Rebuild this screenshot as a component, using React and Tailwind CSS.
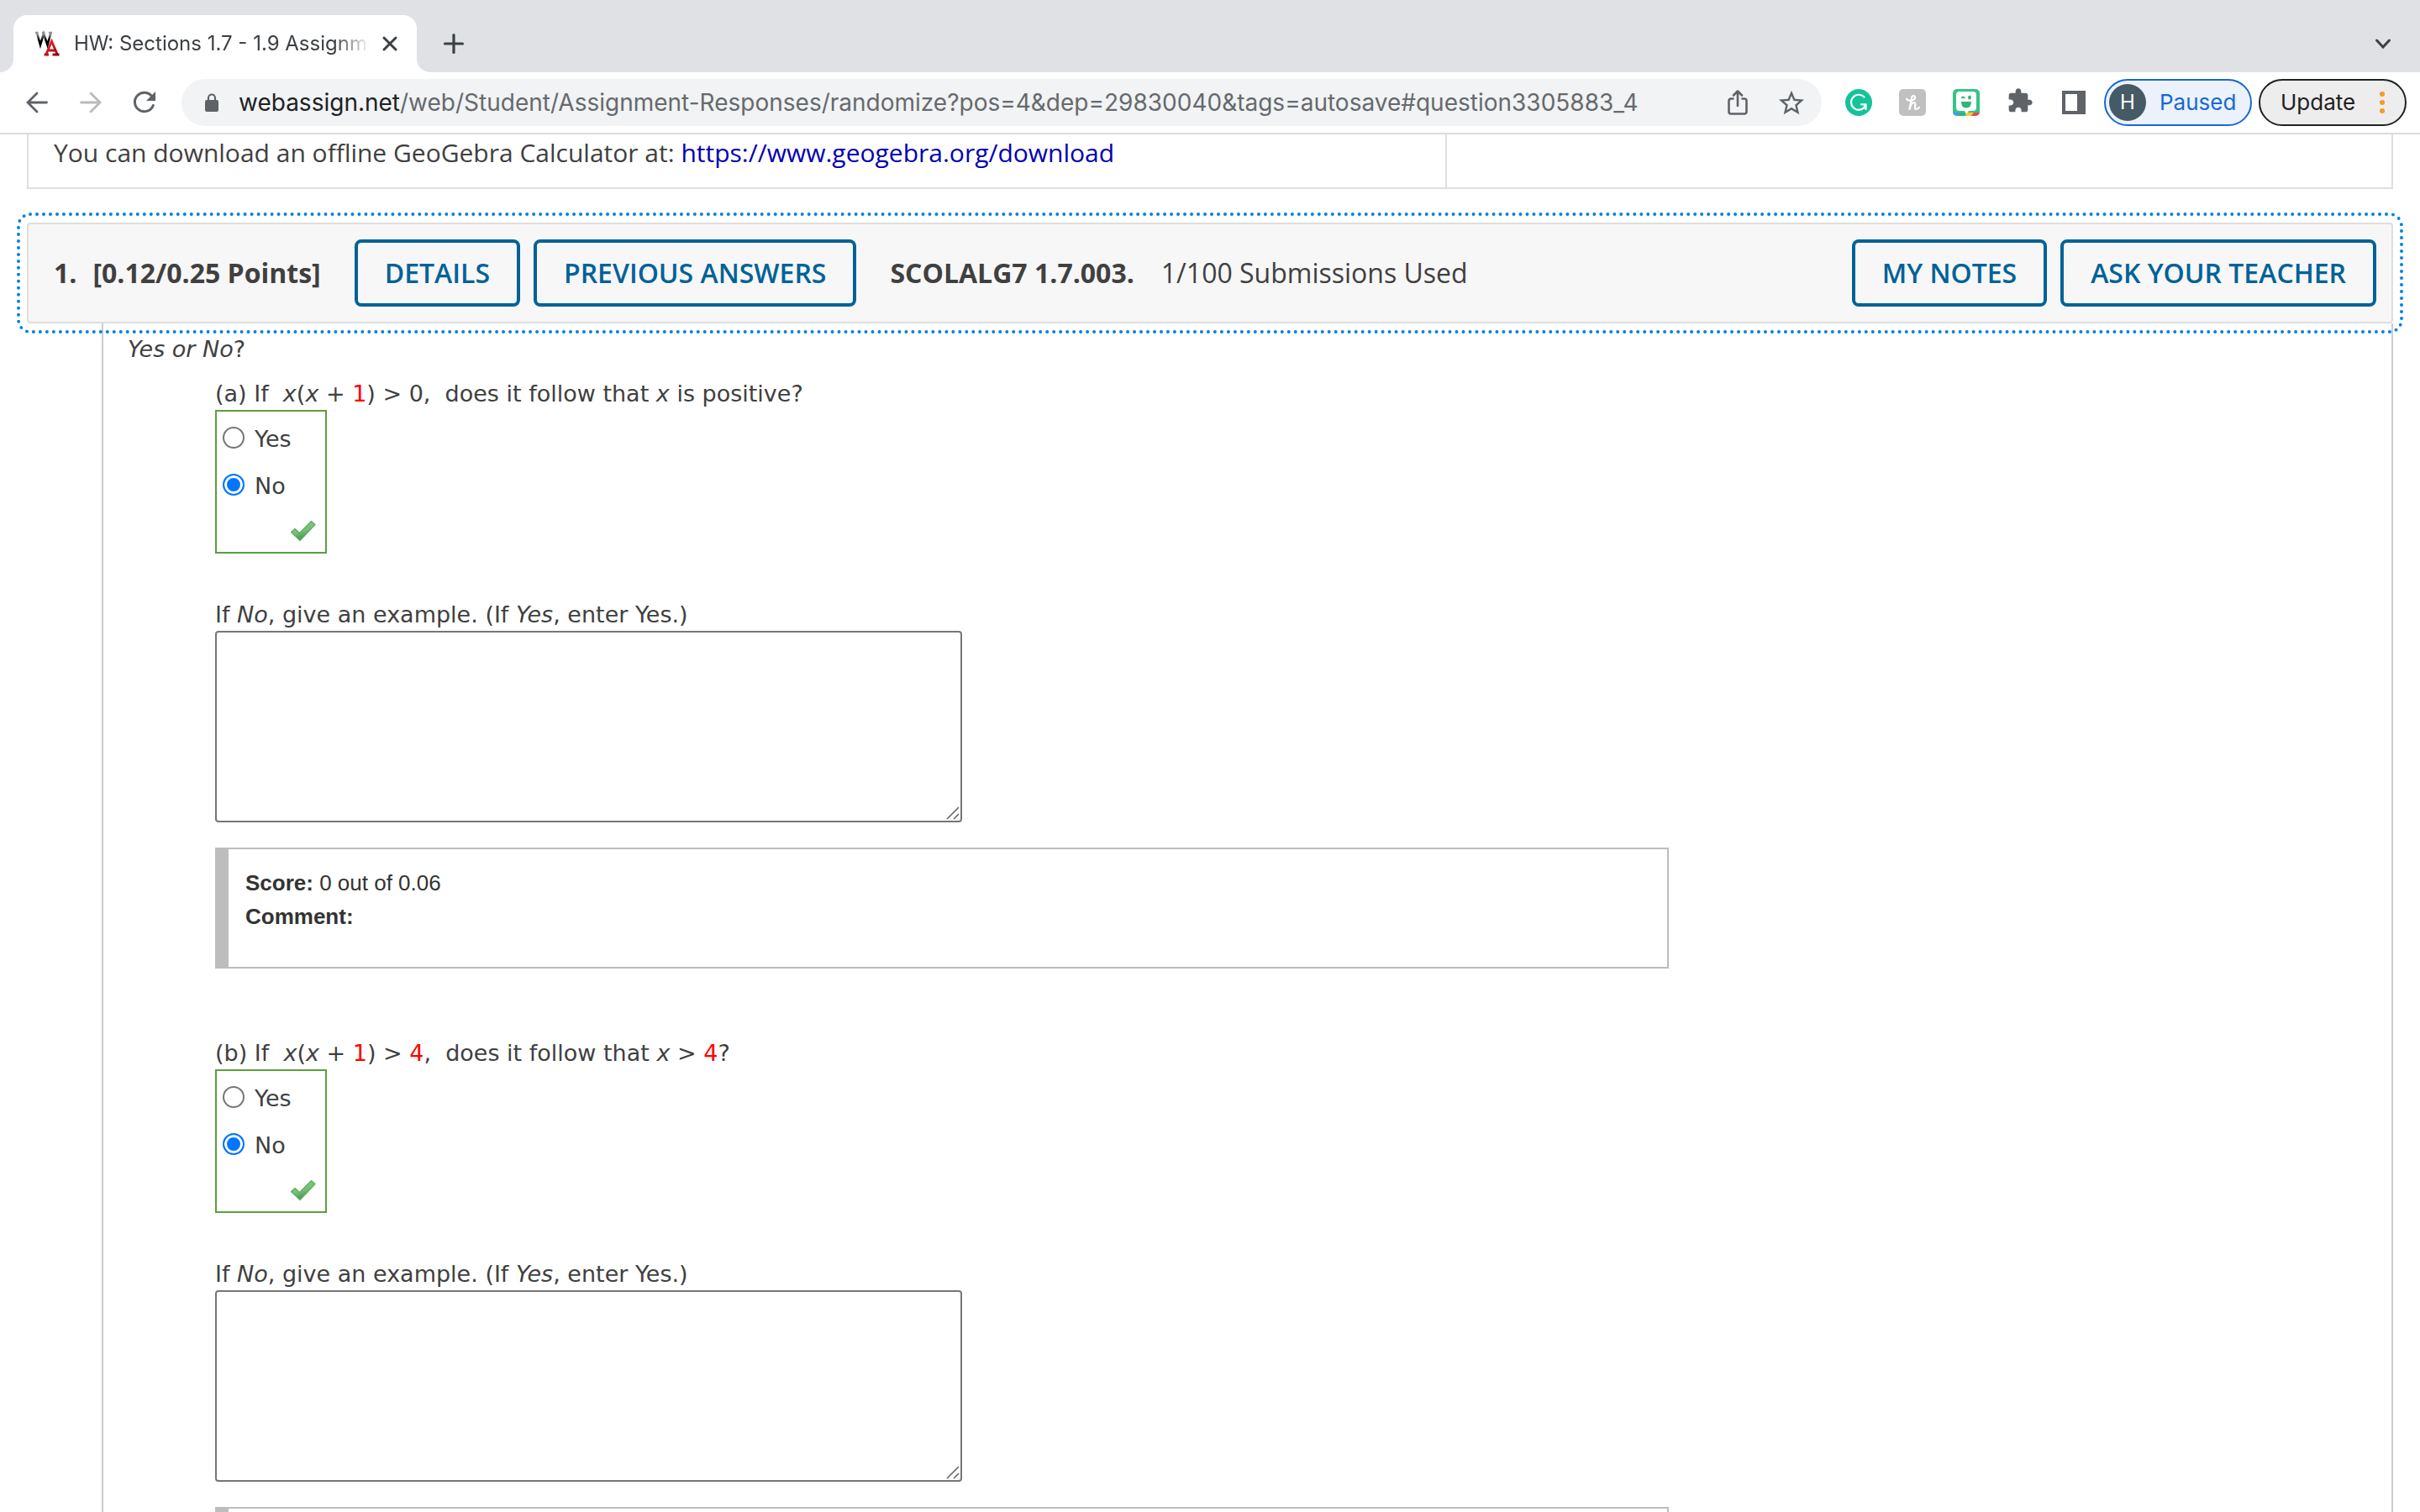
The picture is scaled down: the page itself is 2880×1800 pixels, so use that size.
import React from 'react';

const UI = "font-['Inter','Liberation_Sans',sans-serif]";
const OPEN = "font-['Open_Sans','Noto_Sans',sans-serif]";
const VERDANA = "font-['DejaVu_Sans',sans-serif]";

function Favicon() {
  return (
    <svg width="32" height="32" viewBox="0 0 32 32" className="shrink-0" aria-hidden="true">
      <defs>
        <linearGradient id="fav-w" x1="0" y1="0" x2="0" y2="1">
          <stop offset="0.1" stopColor="#909090" />
          <stop offset="0.6" stopColor="#000" />
        </linearGradient>
        <linearGradient id="fav-a" x1="0" y1="0" x2="1" y2="1">
          <stop offset="0" stopColor="#ff2a2a" />
          <stop offset="1" stopColor="#8e0010" />
        </linearGradient>
      </defs>
      <path d="M2 3h3.500M10 3h3.500M18 3h4M4 3l4 14.500L12 4l4.500 13.500L20.500 3" fill="none" stroke="url(#fav-w)" strokeWidth="2.600" />
      <path d="M12.500 29h5.500M22.500 29h8M15 28.500l6.500-15.500L28 28.500M17.500 24h8" fill="none" stroke="url(#fav-a)" strokeWidth="2.800" />
    </svg>
  );
}

function IconButton({ label, children, className = '' }) {
  return (
    <button type="button" aria-label={label} className={`flex size-16 shrink-0 items-center justify-center ${className}`}>
      {children}
    </button>
  );
}

function Arrow({ forward }) {
  return (
    <svg width="28" height="28" viewBox="0 0 28 28" fill="none" stroke={forward ? '#b9babc' : '#5f6368'} strokeWidth="2.800" strokeLinecap="round">
      {forward ? <path d="M2.500 14h22.500M14 3l11 11-11 11" /> : <path d="M25.500 14H3M14 3L3 14l11 11" />}
    </svg>
  );
}

function TabStrip() {
  return (
    <div className="flex h-[86px] items-end bg-[#dfe1e5]">
      <div className="size-4 shrink-0 bg-white"><div className="size-4 rounded-br-2xl bg-[#dfe1e5]" /></div>
      <div className="flex h-[68px] w-[480px] items-center rounded-t-2xl bg-white pl-6 pr-4">
        <Favicon />
        <span className="ml-4 flex-1 overflow-hidden whitespace-nowrap text-[24px] leading-8 text-[#3c4043] [mask-image:linear-gradient(to_right,black_88%,transparent)]">
          HW: Sections 1.7 - 1.9 Assignment
        </span>
        <button type="button" aria-label="Close tab" className="ml-2 flex size-8 items-center justify-center">
          <svg width="20" height="20" viewBox="0 0 20 20" stroke="#3c4043" strokeWidth="3" strokeLinecap="round"><path d="M3 3l14 14M17 3L3 17" /></svg>
        </button>
      </div>
      <div className="size-4 shrink-0 bg-white"><div className="size-4 rounded-bl-2xl bg-[#dfe1e5]" /></div>
      <button type="button" aria-label="New tab" className="flex h-[68px] w-14 items-center justify-center">
        <svg width="26" height="26" viewBox="0 0 26 26" stroke="#3c4043" strokeWidth="3.200" strokeLinecap="round"><path d="M13 2.500v21M2.500 13h21" /></svg>
      </button>
      <button type="button" aria-label="Search tabs" className="ml-auto mr-5 flex h-[68px] w-12 items-center justify-center">
        <svg width="20" height="14" viewBox="0 0 20 14" fill="none" stroke="#3c4043" strokeWidth="3" strokeLinecap="round"><path d="M2.500 3l7.500 8 7.500-8" /></svg>
      </button>
    </div>
  );
}

function Toolbar() {
  return (
    <div className="flex h-[74px] items-center border-b-2 border-[#dadbde] bg-white pl-3 pr-4">
      <IconButton label="Back"><Arrow /></IconButton>
      <IconButton label="Forward"><Arrow forward /></IconButton>
      <IconButton label="Reload">
        <svg width="30" height="30" viewBox="0 0 30 30">
          <path d="M25.300 18.500A11.300 11.300 0 1 1 24 8" fill="none" stroke="#5f6368" strokeWidth="3" strokeLinecap="round" />
          <path d="M28 2v11H17z" fill="#5f6368" />
        </svg>
      </IconButton>
      <div className="ml-3 flex h-14 flex-1 items-center rounded-full bg-[#f1f3f4] pl-7 pr-1">
        <svg width="16" height="22" viewBox="0 0 16 22" className="shrink-0" aria-hidden="true">
          <rect y="8" width="16" height="14" rx="2" fill="#5f6368" />
          <path d="M4 9V5.500a4 4 0 0 1 8 0V9" fill="none" stroke="#5f6368" strokeWidth="2.200" />
        </svg>
        <label htmlFor="address" className="ml-6 text-[28px] leading-10 text-[#202124]">webassign.net</label>
        <input
          id="address"
          type="text"
          defaultValue="/web/Student/Assignment-Responses/randomize?pos=4&dep=29830040&tags=autosave#question3305883_4"
          className="min-w-0 flex-1 bg-transparent text-[28px] leading-10 text-[#66696d] outline-none"
        />
        <IconButton label="Share this page">
          <svg width="26" height="32" viewBox="0 0 26 32" fill="none" stroke="#5f6368" strokeWidth="2.600" strokeLinecap="round" strokeLinejoin="round">
            <path d="M7.500 11.500H5A2.500 2.500 0 0 0 2.500 14v13A2.500 2.500 0 0 0 5 29.500h16a2.500 2.500 0 0 0 2.500-2.500V14a2.500 2.500 0 0 0-2.500-2.500h-2.500M13 20V3M8 7.500L13 2.500l5 5" />
          </svg>
        </IconButton>
        <IconButton label="Bookmark this tab">
          <svg width="30" height="30" viewBox="0 0 24 24" fill="#5f6368">
            <path d="M22 9.240l-7.190-.62L12 2 9.190 8.630 2 9.240l5.460 4.730L5.820 21 12 17.270 18.180 21l-1.630-7.030L22 9.240zM12 15.400l-3.760 2.270 1-4.280-3.320-2.880 4.380-.38L12 6.100l1.710 4.040 4.380.38-3.320 2.880 1 4.280L12 15.400z" transform="translate(-2.400 -1.800) scale(1.200)" />
          </svg>
        </IconButton>
      </div>
      <div className="ml-3 flex items-center">
        <IconButton label="Grammarly">
          <svg width="32" height="32" viewBox="0 0 32 32">
            <circle cx="16" cy="16" r="16" fill="#15c39a" />
            <path d="M22.500 9.500A9 9 0 1 0 24.200 19.500M24.500 24v-5.700h-5.500" fill="none" stroke="#fff" strokeWidth="2.200" strokeLinecap="round" />
          </svg>
        </IconButton>
        <IconButton label="Honey">
          <svg width="32" height="32" viewBox="0 0 32 32">
            <rect width="32" height="32" rx="5" fill="#c0c0c0" />
            <path d="M9 11.500c1 3.500 10 2.500 10-1.500 0-3-3.500-2.500-4 .5L12.500 24c1-4 3-8 5.500-8 3 0-.5 8 2 8 1.500 0 2.700-.8 4-2" fill="none" stroke="#fff" strokeWidth="2.200" strokeLinecap="round" strokeLinejoin="round" />
          </svg>
        </IconButton>
        <IconButton label="Bitmoji">
          <svg width="32" height="32" viewBox="0 0 32 32">
            <defs><clipPath id="bit"><rect width="32" height="32" rx="5" /></clipPath></defs>
            <g clipPath="url(#bit)">
              <path fill="#36c486" d="M0 0h32v32H0z" />
              <path fill="#3f9bf0" d="M0 28h9l-3 4H0z" />
              <path fill="#2fb577" d="M9 28h7l-3 4H6z" />
              <path fill="#fccb30" d="M17 28h8l-3 4h-7z" />
              <path fill="#ef4a3c" d="M25 28h7v4H22z" />
              <path fill="#fff" d="M8 3h16q4 0 4 4v15q0 4-4 4h-5l-3 4-2-4H8q-4 0-4-4V7q0-4 4-4z" />
            </g>
            <path d="M10 15h12q0 7.500-6 7.500T10 15z" fill="#2fb577" />
            <ellipse cx="20" cy="10" rx="1.900" ry="2.600" fill="#2fb577" />
            <path d="M10.500 11q1.800-3 3.600 0" fill="none" stroke="#2fb577" strokeWidth="2" />
          </svg>
        </IconButton>
        <IconButton label="Extensions">
          <svg width="32" height="32" viewBox="0 0 24 24" fill="#5f6368" className="-mt-1">
            <path d="M20.500 11H19V7c0-1.100-.9-2-2-2h-4V3.500C13 2.120 11.880 1 10.500 1S8 2.120 8 3.500V5H4c-1.100 0-1.990.9-1.990 2v3.800H3.500c1.490 0 2.700 1.210 2.700 2.700s-1.210 2.700-2.700 2.700H2V20c0 1.100.9 2 2 2h3.800v-1.500c0-1.490 1.210-2.700 2.700-2.700 1.490 0 2.700 1.210 2.700 2.700V22H17c1.100 0 2-.9 2-2v-4h1.500c1.380 0 2.500-1.120 2.500-2.500S21.880 11 20.500 11z" />
          </svg>
        </IconButton>
        <IconButton label="Side panel">
          <svg width="28" height="28" viewBox="0 0 28 28"><path fill="#5f6368" fillRule="evenodd" d="M0 0h28v28H0zM4 4v20h14V4z" /></svg>
        </IconButton>
      </div>
      <button type="button" className="ml-1 flex h-14 w-44 items-center rounded-full border-2 border-[#1967d2] bg-[#ebf2fb] pl-1">
        <span className="flex size-11 items-center justify-center rounded-full bg-[#455a64] text-[24px] text-white">H</span>
        <span className="ml-4 text-[26px] leading-8 text-[#1967d2]">Paused</span>
      </button>
      <button type="button" className="ml-2 flex h-14 w-44 items-center justify-between rounded-full border-2 border-[#202124] bg-[#ededed] pl-6 pr-6 text-[26px] leading-8 text-[#202124]">
        Update
        <svg width="6" height="26" viewBox="0 0 6 26" fill="#f59a23" aria-hidden="true"><circle cx="3" cy="3" r="3" /><circle cx="3" cy="13" r="3" /><circle cx="3" cy="23" r="3" /></svg>
      </button>
    </div>
  );
}

function ActionButton({ children }) {
  return (
    <button type="button" className="h-20 whitespace-nowrap rounded-lg border-4 border-[#006298] px-8 text-[32px] font-semibold leading-10 text-[#006298]">
      {children}
    </button>
  );
}

function Check() {
  return (
    <svg width="32" height="26" viewBox="0 0 32 26" role="img" aria-label="Correct">
      <defs>
        <linearGradient id="tick" x1="0" y1="0" x2="0.400" y2="1">
          <stop offset="0" stopColor="#86cc86" />
          <stop offset="0.600" stopColor="#74c274" />
          <stop offset="1" stopColor="#3f8f46" />
        </linearGradient>
      </defs>
      <path d="M1.500 14.500L6 10.500l5.500 5L25.500 1.500l4.500 4L12 24.500z" fill="url(#tick)" stroke="#62ab64" strokeWidth="1.200" strokeLinejoin="round" />
    </svg>
  );
}

function Choice({ name, value, checked }) {
  return (
    <label className="flex h-14 items-center gap-3">
      <input
        type="radio"
        name={name}
        value={value}
        defaultChecked={checked}
        className="size-[26px] shrink-0 appearance-none rounded-full border-2 border-[#767676] bg-white checked:border-[#0075ff] checked:bg-[#0075ff] checked:shadow-[inset_0_0_0_3px_white]"
      />
      <span className="pt-1">{value}</span>
    </label>
  );
}

function Part({ id, children }) {
  return (
    <section>
      <p>{children}</p>
      <div role="radiogroup" aria-label={`Part ${id}`} className="mt-[3px] h-[171px] w-[133px] border-2 border-[#5b9f3b] pl-[7px] pt-[3px]">
        <Choice name={id} value="Yes" />
        <Choice name={id} value="No" checked />
        <div className="flex justify-end pr-[10px] pt-[14px]"><Check /></div>
      </div>
      <label htmlFor={`${id}-example`} className="mt-[57px] block">
        If <i>No</i>, give an example. (If <i>Yes</i>, enter Yes.)
      </label>
      <div className="relative mt-[3px] h-[228px] w-[889px] max-w-full">
        <textarea id={`${id}-example`} className="block size-full resize-none rounded border-2 border-[#767676] bg-white p-2 outline-none" />
        <svg width="18" height="18" viewBox="0 0 18 18" className="pointer-events-none absolute bottom-0.5 right-0.5" stroke="#666" strokeWidth="1.600" aria-hidden="true">
          <path d="M2 16L16 2M10 16l6-6" />
        </svg>
      </div>
      <div className="mt-[30px] h-36 w-[1730px] max-w-full border-2 border-l-16 border-[#bdbdbd] pl-5 pt-5 font-['Liberation_Sans',sans-serif] text-[26px] leading-10 text-[#333]">
        <p><b>Score:</b> 0 out of 0.06</p>
        <p><b>Comment:</b></p>
      </div>
    </section>
  );
}

function Red({ children }) {
  return <span className="text-[#f00]">{children}</span>;
}

export default function App() {
  return (
    <div className={`flex h-screen flex-col overflow-hidden bg-white ${UI}`}>
      <header>
        <TabStrip />
        <Toolbar />
      </header>
      <main className={`min-h-0 flex-1 overflow-hidden px-8 text-[#404040] ${OPEN}`}>
        <table className="w-full table-fixed border-collapse">
          <tbody>
            <tr>
              <td className="w-3/5 border-x-2 border-b-2 border-[#dedede] pb-[21px] pl-[30px] pt-0.5 text-[30px] leading-10">
                You can download an offline GeoGebra Calculator at:{' '}
                <a href="https://www.geogebra.org/download" className="text-[#0000b4]">https://www.geogebra.org/download</a>
              </td>
              <td className="border-x-2 border-b-2 border-[#dedede]" />
            </tr>
          </tbody>
        </table>

        <div className="relative mt-10 flex h-[120px] items-center rounded border-2 border-[#dedede] bg-[#f7f7f7] pl-[30px] pr-[18px] text-[32px] leading-10 outline-4 outline-offset-8 outline-dotted outline-[#0080e5]">
          <span className="font-bold">1.</span>
          <span className="ml-[19px] font-bold">[0.12/0.25 Points]</span>
          <div className="ml-10 flex gap-4">
            <ActionButton>DETAILS</ActionButton>
            <ActionButton>PREVIOUS ANSWERS</ActionButton>
          </div>
          <span className="ml-10 font-bold">SCOLALG7 1.7.003.</span>
          <span className="ml-8">1/100 Submissions Used</span>
          <div className="ml-auto flex gap-4">
            <ActionButton>MY NOTES</ActionButton>
            <ActionButton>ASK YOUR TEACHER</ActionButton>
          </div>
        </div>

        <div className={`ml-[89px] border-x-2 border-[#ccc] pl-[29px] pt-[15px] text-[27px] leading-8 ${VERDANA}`}>
          <p><i>Yes or No</i>?</p>
          <div className="ml-[104px] mt-[21px] flex flex-col gap-[85px]">
            <Part id="a">
              (a) If &nbsp;<i>x</i>(<i>x</i> + <Red>1</Red>) &gt; 0, &nbsp;does it follow that <i>x</i> is positive?
            </Part>
            <Part id="b">
              (b) If &nbsp;<i>x</i>(<i>x</i> + <Red>1</Red>) &gt; <Red>4</Red>, &nbsp;does it follow that <i>x</i> &gt; <Red>4</Red>?
            </Part>
          </div>
        </div>
      </main>
    </div>
  );
}
